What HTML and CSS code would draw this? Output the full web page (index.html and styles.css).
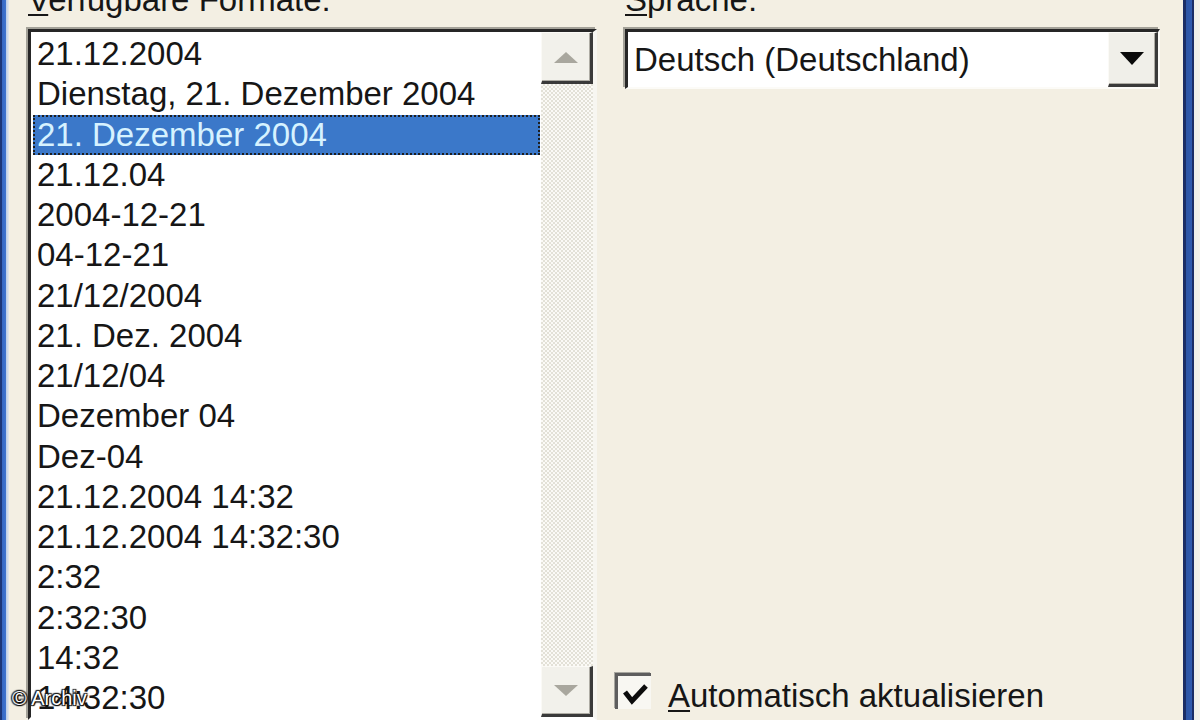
FILE: index.html
```html
<!DOCTYPE html>
<html lang="de">
<head>
<meta charset="utf-8">
<title>Datum und Uhrzeit</title>
<link rel="stylesheet" href="styles.css">
</head>
<body>
<div class="window">
  <div class="frame-left"></div>
  <div class="content">
    <div class="col col-left">
      <div class="label"><span class="u">V</span>erfügbare Formate:</div>
      <div class="listbox">
        <ul class="items">
          <li>21.12.2004</li>
          <li>Dienstag, 21. Dezember 2004</li>
          <li class="selected">21. Dezember 2004</li>
          <li>21.12.04</li>
          <li>2004-12-21</li>
          <li>04-12-21</li>
          <li>21/12/2004</li>
          <li>21. Dez. 2004</li>
          <li>21/12/04</li>
          <li>Dezember 04</li>
          <li>Dez-04</li>
          <li>21.12.2004 14:32</li>
          <li>21.12.2004 14:32:30</li>
          <li>2:32</li>
          <li>2:32:30</li>
          <li>14:32</li>
          <li>14:32:30</li>
        </ul>
        <div class="vscroll">
          <div class="sbtn sbtn-up">
            <svg width="24" height="11" viewBox="0 0 24 11"><polygon points="12,0 24,11 0,11" fill="#a9a79e"/></svg>
          </div>
          <div class="track"></div>
          <div class="sbtn sbtn-down">
            <svg width="24" height="11" viewBox="0 0 24 11"><polygon points="0,0 24,0 12,11" fill="#a9a79e"/></svg>
          </div>
        </div>
      </div>
    </div>
    <div class="col col-right">
      <div class="label"><span class="u">S</span>prache:</div>
      <div class="combo">
        <div class="combo-text">Deutsch (Deutschland)</div>
        <div class="combo-btn">
          <svg width="24" height="13" viewBox="0 0 24 13"><polygon points="0,0 24,0 12,13" fill="#0a0a0a"/></svg>
        </div>
      </div>
      <div class="check-row">
        <span class="checkbox">
          <svg width="33" height="33" viewBox="0 0 33 33"><polyline points="7,16 14,25 28,10" fill="none" stroke="#0c0c0c" stroke-width="5"/></svg>
        </span>
        <span class="check-label"><span class="u">A</span>utomatisch aktualisieren</span>
      </div>
    </div>
  </div>
  <div class="frame-right"></div>
  <div class="watermark">© Archiv</div>
</div>
</body>
</html>
```
FILE: styles.css
```css
html, body {
  margin: 0;
  padding: 0;
}
body {
  width: 1200px;
  height: 720px;
  overflow: hidden;
  background: #f3efe3;
  font-family: "Liberation Sans", Arial, sans-serif;
  font-size: 33px;
  color: #161616;
}
.window {
  position: relative;
  display: flex;
  width: 1200px;
  height: 720px;
  overflow: hidden;
}
.frame-left {
  width: 9px;
  flex: none;
  background: linear-gradient(to right, #1b3578 0, #1b3578 2px, #3566c2 2px, #3f74d0 6px, #b8cbe8 6px, #e6e8ea 9px);
}
.frame-right {
  width: 17px;
  flex: none;
  background: linear-gradient(to right, #1a2d66 0, #1a2d66 3px, #2c55a6 3px, #2f5aae 9px, #1a2d66 9px, #1a2d66 11px, #eceee9 11px, #f3f1ea 17px);
}
.content {
  flex: 1;
  display: flex;
  gap: 28px;
  padding-left: 19px;
}
.col {
  display: flex;
  flex-direction: column;
  height: 720px;
}
.col-left {
  width: 569px;
}
.col-right {
  width: 535px;
}
.label {
  margin-top: -20px;
  height: 40px;
  line-height: 40px;
  white-space: nowrap;
}
.u {
  text-decoration: underline;
  text-decoration-thickness: 2px;
  text-underline-offset: 3px;
}
.listbox {
  margin-top: 9px;
  height: 691px;
  box-sizing: border-box;
  display: flex;
  background: #fff;
  border-top: 3px solid #262626;
  border-left: 3px solid #262626;
  border-right: 4px solid #f7f6f1;
  border-bottom: 3px solid #fff;
  box-shadow: -2px -2px 0 #a3a198;
}
.items {
  width: 510px;
  flex: none;
  margin: 0;
  padding: 2px 0 0 0;
  list-style: none;
  overflow: hidden;
}
.items li {
  height: 40.25px;
  line-height: 40.25px;
  padding-left: 4px;
  margin: 0 1px 0 2px;
  white-space: nowrap;
}
.items li.selected {
  background: #3b78c9;
  color: #d6f2ff;
  outline: 2px dotted #1e1e1e;
  outline-offset: -2px;
}
.vscroll {
  width: 52px;
  flex: none;
  display: flex;
  flex-direction: column;
}
.track {
  flex: 1;
  background: repeating-conic-gradient(#e3e1d7 0 25%, #fbfaf6 0 50%) 0 0 / 4px 4px;
}
.sbtn {
  height: 51px;
  box-sizing: border-box;
  display: flex;
  align-items: center;
  justify-content: center;
  background: #f2f1eb;
  border-top: 1px solid #fbfaf6;
  border-left: 1px solid #fbfaf6;
  border-right: 3px solid #3a3a3a;
  border-bottom: 3px solid #3a3a3a;
  box-shadow: inset -1px -1px 0 #aeaca4;
}
.sbtn-up {
  height: 52px;
}
.combo {
  margin-top: 9px;
  height: 60px;
  box-sizing: border-box;
  display: flex;
  background: #fff;
  border-top: 3px solid #262626;
  border-left: 3px solid #262626;
  border-right: 2px solid #fcfbf7;
  border-bottom: 2px solid #fcfbf7;
  box-shadow: -2px -2px 0 #a3a198;
}
.combo-text {
  flex: 1;
  line-height: 55px;
  padding-left: 6px;
  white-space: nowrap;
}
.combo-btn {
  width: 50px;
  flex: none;
  box-sizing: border-box;
  display: flex;
  align-items: center;
  justify-content: center;
  background: #f0efe9;
  border-top: 1px solid #fbfaf6;
  border-left: 1px solid #fbfaf6;
  border-right: 3px solid #3a3a3a;
  border-bottom: 3px solid #3a3a3a;
  box-shadow: inset -1px -1px 0 #aeaca4;
}
.check-row {
  margin-top: auto;
  margin-left: -10px;
  margin-bottom: 4px;
  height: 40px;
  display: flex;
  align-items: flex-start;
  gap: 17px;
}
.checkbox {
  width: 36px;
  height: 36px;
  margin-top: -3px;
  box-sizing: border-box;
  display: flex;
  align-items: center;
  justify-content: center;
  background: #f8f7f2;
  border-top: 3px solid #5e5e5e;
  border-left: 3px solid #5e5e5e;
  box-shadow: -1px -1px 0 #a8a7a0;
}
.check-label {
  line-height: 40px;
  white-space: nowrap;
}
.watermark {
  position: absolute;
  left: 12px;
  top: 685px;
  font-size: 20px;
  line-height: 26px;
  color: #fff;
  text-shadow: 0 0 2px #000, 1px 1px 1px #000, -1px -1px 1px #222, 1px -1px 1px #222, -1px 1px 1px #222;
  white-space: nowrap;
}
```
